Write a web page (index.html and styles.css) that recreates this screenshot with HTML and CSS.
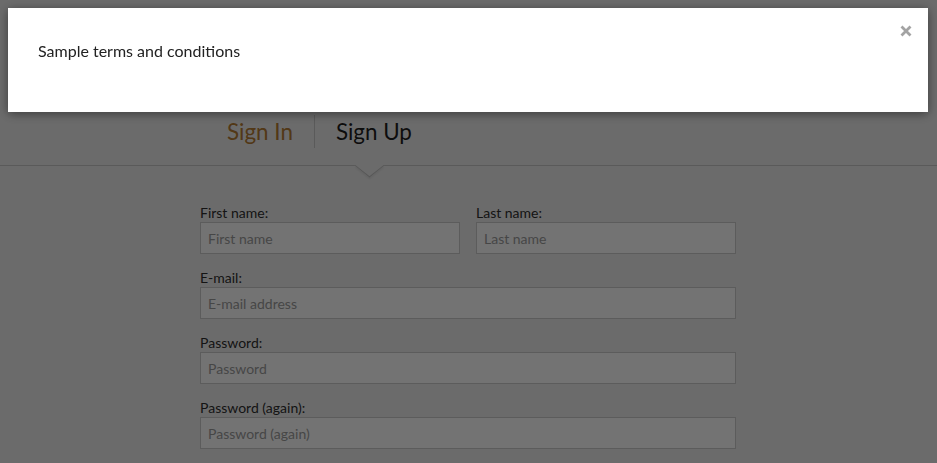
FILE: index.html
```html
<!DOCTYPE html>
<html>
<head>
<meta charset="utf-8">
<link rel="stylesheet" href="styles.css">
</head>
<body>
<div class="page">
  <header class="header">
    <div class="container">
      <nav class="tabs">
        <a class="tab tab-in">Sign In</a>
        <span class="divider"></span>
        <a class="tab tab-up">Sign Up</a>
      </nav>
    </div>
    <span class="pointer"></span>
  </header>
  <form class="container form">
    <div class="row two">
      <div class="field">
        <label>First name:</label>
        <input type="text" placeholder="First name">
      </div>
      <div class="field">
        <label>Last name:</label>
        <input type="text" placeholder="Last name">
      </div>
    </div>
    <div class="field">
      <label>E-mail:</label>
      <input type="text" placeholder="E-mail address">
    </div>
    <div class="field">
      <label>Password:</label>
      <input type="password" placeholder="Password">
    </div>
    <div class="field">
      <label>Password (again):</label>
      <input type="password" placeholder="Password (again)">
    </div>
  </form>
</div>
<div class="overlay"></div>
<div class="modal">
  <p class="modal-text">Sample terms and conditions</p>
  <span class="close"><svg width="12" height="12" viewBox="0 0 12 12"><path d="M1.5 1.5 L10.5 10.5 M10.5 1.5 L1.5 10.5" stroke="#a3a3a3" stroke-width="2.8" stroke-linecap="butt"/></svg></span>
</div>
</body>
</html>
```
FILE: styles.css
```css
html, body {
  margin: 0;
  padding: 0;
  height: 100%;
}
body {
  background: #eeeeee;
  font-family: Lato, "Open Sans", sans-serif;
  color: #333;
  overflow: hidden;
}
.page {
  min-height: 100%;
}
.header {
  position: relative;
  padding-top: 115px;
  padding-bottom: 17px;
  border-bottom: 1px solid #c8c8c8;
  background: #eeeeee;
}
.container {
  width: 536px;
  padding-right: 1px;
  margin: 0 auto;
}
.tabs {
  display: flex;
  align-items: stretch;
  height: 33px;
  padding-left: 27px;
}
.tab {
  font-size: 22.4px;
  line-height: 33px;
}
.tab-in {
  color: #b57c34;
}
.tab-up {
  color: #1e1e1e;
}
.divider {
  width: 1px;
  background: #c8c8c8;
  margin: 0 21px;
}
.pointer {
  position: absolute;
  left: 359px;
  bottom: -11px;
  width: 21px;
  height: 21px;
  box-sizing: border-box;
  background: #eeeeee;
  border-right: 1px solid #c0c0c0;
  border-bottom: 1px solid #c0c0c0;
  box-shadow: 2px 2px 2px rgba(0, 0, 0, 0.06);
  transform: scaleY(0.8) rotate(45deg);
}
.form {
  padding-top: 38px;
}
.row.two {
  display: grid;
  grid-template-columns: 1fr 1fr;
  column-gap: 16px;
}
.field {
  display: flex;
  flex-direction: column;
  margin-bottom: 15px;
}
label {
  font-size: 14px;
  line-height: 18px;
  color: #2e2e2e;
}
input {
  box-sizing: border-box;
  height: 32px;
  border: 1px solid #cccccc;
  background: #ffffff;
  padding: 0 7px;
  font-family: Lato, "Open Sans", sans-serif;
  font-size: 14px;
  color: #333;
  margin: 0;
  outline: none;
}
input::placeholder {
  color: #9c9c9c;
  opacity: 1;
}
.overlay {
  position: fixed;
  inset: 0;
  background: rgba(0, 0, 0, 0.55);
}
.modal {
  position: fixed;
  top: 8px;
  left: 8px;
  width: 920px;
  height: 104px;
  box-sizing: border-box;
  background: #ffffff;
  box-shadow: 0 2px 10px rgba(0, 0, 0, 0.45);
  padding: 33px 30px;
}
.modal-text {
  margin: 0;
  font-size: 16px;
  line-height: 20px;
  color: #222;
}
.close {
  position: absolute;
  top: 17px;
  right: 16px;
  width: 12px;
  height: 12px;
  display: block;
}
.close svg {
  display: block;
}
```
